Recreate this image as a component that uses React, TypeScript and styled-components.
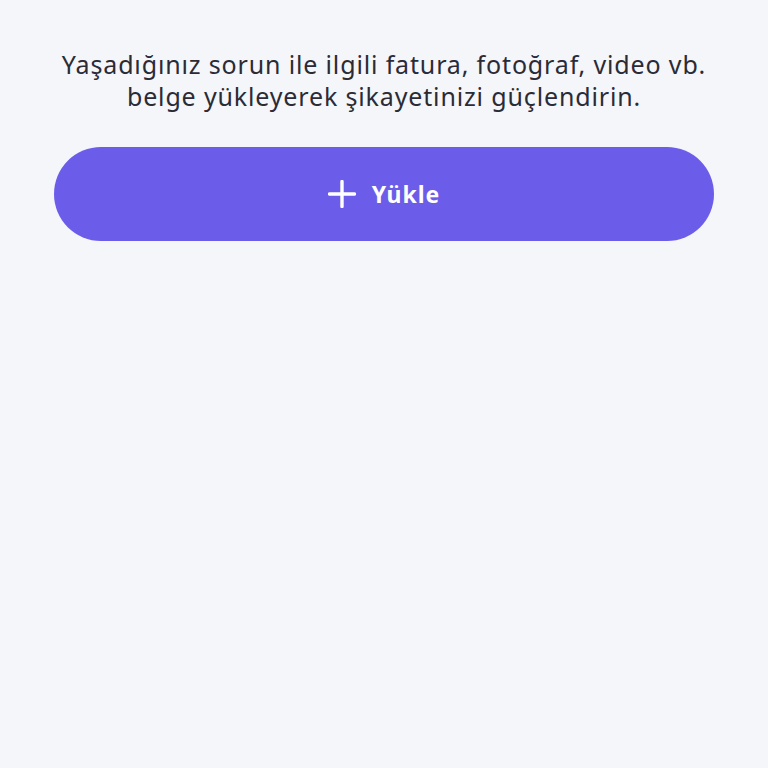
import React from 'react';
import styled, { createGlobalStyle } from 'styled-components';

const GlobalStyle = createGlobalStyle`
  html, body {
    margin: 0;
    padding: 0;
    background: #f4f6fa;
  }
  body {
    font-family: "Noto Sans", "Open Sans", sans-serif;
  }
`;

const Page = styled.div`
  min-height: 768px;
  display: flex;
  flex-direction: column;
  align-items: stretch;
  padding: 48px 54px 0;
  box-sizing: border-box;
`;

const Description = styled.p`
  margin: 0;
  text-align: center;
  font-size: 25px;
  line-height: 32px;
  letter-spacing: 0.85px;
  color: #2b2b36;
  font-weight: 400;
`;

const UploadButton = styled.button`
  margin-top: 35px;
  height: 94px;
  border: none;
  border-radius: 47px;
  background: #6b5de9;
  color: #ffffff;
  display: flex;
  align-items: center;
  justify-content: center;
  gap: 16px;
  font-family: inherit;
  font-size: 23px;
  font-weight: 700;
  letter-spacing: 1px;
  cursor: pointer;
`;

const PlusIcon = () => (
  <svg width="28" height="28" viewBox="0 0 28 28" fill="none">
    <path d="M14 1.5v25M1.5 14h25" stroke="#ffffff" strokeWidth="3.4" strokeLinecap="round" />
  </svg>
);

export default function App() {
  return (
    <>
      <GlobalStyle />
      <Page>
        <Description>
          Yaşadığınız sorun ile ilgili fatura, fotoğraf, video vb.
          <br />
          belge yükleyerek şikayetinizi güçlendirin.
        </Description>
        <UploadButton>
          <PlusIcon />
          Yükle
        </UploadButton>
      </Page>
    </>
  );
}
